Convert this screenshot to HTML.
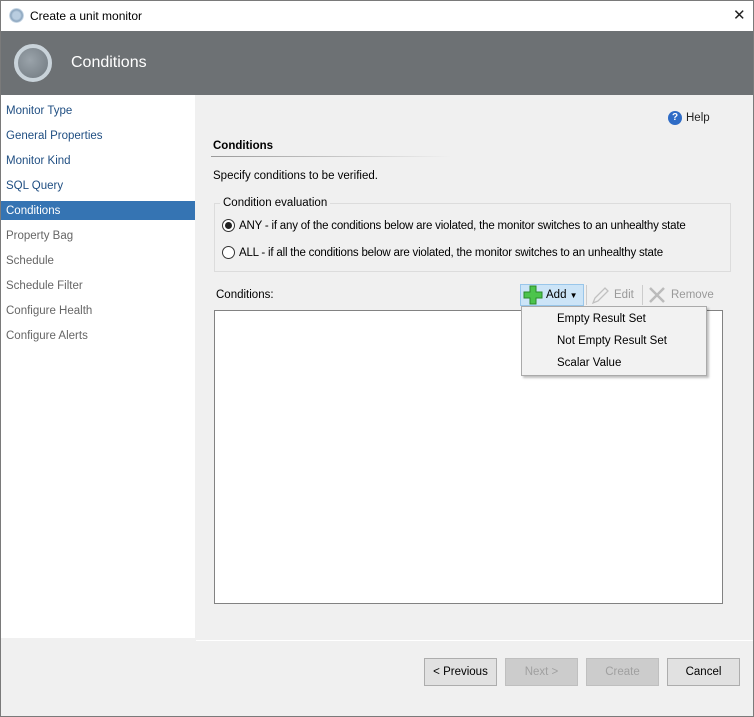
<!DOCTYPE html>
<html><head><style>
*{margin:0;padding:0;box-sizing:border-box}
body{width:754px;height:717px;overflow:hidden;background:#f0f0f0;font-family:"Liberation Sans",sans-serif;font-size:12px;color:#000;position:relative}
.a{position:absolute}
.win{left:0;top:0;width:754px;height:717px;border:1px solid #7a7a7a}
.nav div{position:absolute;left:6px;font-size:11.5px;color:#666}
.btn{position:absolute;top:658px;height:28px;width:73px;border:1px solid #adadad;background:#e1e1e1;text-align:center;line-height:27px;font-size:11.5px}
.dis{color:#a0a0a0;background:#cccccc;border-color:#bfbfbf}
.rad{position:absolute;width:13px;height:13px;border:1px solid #333;border-radius:50%;background:#fff}
</style></head><body>
<div class="a" style="left:0;top:0;width:754px;height:31px;background:#fff"></div>
<div class="a" style="left:9px;top:8px;width:15px;height:15px;border-radius:50%;background:radial-gradient(circle,#b9cde0 35%,#8aa4bd 55%,#dde8f2 70%,#7f95aa 85%)"></div>
<div class="a" style="left:30px;top:9px;font-size:12px">Create a unit monitor</div>
<div class="a" style="left:733px;top:6px;font-size:15px;color:#222;font-weight:lighter">✕</div>
<div class="a" style="left:1px;top:31px;width:752px;height:64px;background:#6d7174"></div>
<div class="a" style="left:14px;top:44px;width:38px;height:38px;border-radius:50%;border:4px solid #c9d3da;background:radial-gradient(circle at 40% 40%,#9aa3aa,#6f787f)"></div>
<div class="a" style="left:71px;top:54px;font-size:16px;color:#fff">Conditions</div>
<div class="a" style="left:1px;top:95px;width:194px;height:543px;background:#fff"></div>
<div class="a" style="left:0;top:201px;width:195px;height:19px;background:#3574b3"></div>
<div class="nav">
<div style="top:105px;color:#1f4e82">Monitor Type</div>
<div style="top:130px;color:#1f4e82">General Properties</div>
<div style="top:155px;color:#1f4e82">Monitor Kind</div>
<div style="top:180px;color:#1f4e82">SQL Query</div>
<div style="top:205px;color:#fff">Conditions</div>
<div style="top:230px">Property Bag</div>
<div style="top:255px">Schedule</div>
<div style="top:280px">Schedule Filter</div>
<div style="top:305px">Configure Health</div>
<div style="top:330px">Configure Alerts</div>
</div>
<div class="a" style="left:668px;top:111px;width:14px;height:14px;border-radius:50%;background:#2f6cc6;color:#fff;font-size:10px;font-weight:bold;text-align:center;line-height:14px">?</div>
<div class="a" style="left:686px;top:112px;font-size:11.5px;color:#222">Help</div>
<div class="a" style="left:213px;top:140px;font-weight:bold;font-size:11.5px">Conditions</div>
<div class="a" style="left:211px;top:156px;width:240px;height:1px;background:linear-gradient(90deg,#999,#f0f0f0)"></div>
<div class="a" style="left:213px;top:170px;font-size:11.5px">Specify conditions to be verified.</div>
<div class="a" style="left:214px;top:203px;width:517px;height:69px;border:1px solid #dcdcdc"></div>
<div class="a" style="left:220px;top:197px;padding:0 3px;background:#f0f0f0;font-size:11.5px">Condition evaluation</div>
<div class="rad" style="left:222px;top:219px"><div style="position:absolute;left:2px;top:2px;width:7px;height:7px;border-radius:50%;background:#222"></div></div>
<div class="a" style="left:239px;top:220px;font-size:11.5px;letter-spacing:-0.2px">ANY - if any of the conditions below are violated, the monitor switches to an unhealthy state</div>
<div class="rad" style="left:222px;top:246px"></div>
<div class="a" style="left:239px;top:247px;font-size:11.5px;letter-spacing:-0.2px">ALL - if all the conditions below are violated, the monitor switches to an unhealthy state</div>
<div class="a" style="left:216px;top:289px;font-size:11.5px">Conditions:</div>
<div class="a" style="left:214px;top:310px;width:509px;height:294px;background:#fff;border:1px solid #828282"></div>
<div class="a" style="left:520px;top:284px;width:64px;height:22px;background:#cce4f7;border:1px solid #99c6ea"></div>
<svg class="a" style="left:523px;top:285px" width="20" height="20" viewBox="0 0 20 20"><path d="M7 1h6v6h6v6h-6v6H7v-6H1V7h6z" fill="#4cc44c" stroke="#2a8a2a"/></svg>
<div class="a" style="left:546px;top:289px;font-size:11.5px">Add <span style="font-size:8px">▼</span></div>
<div class="a" style="left:586px;top:285px;width:1px;height:20px;background:#ccc"></div>
<svg class="a" style="left:590px;top:285px" width="20" height="20"><path d="M3 18l2-5 10-10 3 3-10 10z" fill="none" stroke="#c0c0c0" stroke-width="1.3"/></svg>
<div class="a" style="left:614px;top:289px;font-size:11.5px;color:#999">Edit</div>
<div class="a" style="left:642px;top:285px;width:1px;height:20px;background:#ccc"></div>
<svg class="a" style="left:647px;top:285px" width="20" height="20"><path d="M3 3l14 14M17 3L3 17" stroke="#bbb" stroke-width="2.5"/></svg>
<div class="a" style="left:671px;top:289px;font-size:11.5px;color:#999">Remove</div>
<div class="a" style="left:521px;top:306px;width:186px;height:70px;background:#f2f2f2;border:1px solid #aaa;box-shadow:2px 2px 2px rgba(0,0,0,.25)"></div>
<div class="a" style="left:557px;top:313px;font-size:11.5px">Empty Result Set</div>
<div class="a" style="left:557px;top:335px;font-size:11.5px">Not Empty Result Set</div>
<div class="a" style="left:557px;top:357px;font-size:11.5px">Scalar Value</div>
<div class="a" style="left:196px;top:640px;width:557px;height:1px;background:#fff"></div>
<div class="btn" style="left:424px">&lt; Previous</div>
<div class="btn dis" style="left:505px">Next &gt;</div>
<div class="btn dis" style="left:586px">Create</div>
<div class="btn" style="left:667px">Cancel</div>
<div class="a win"></div>
</body></html>
